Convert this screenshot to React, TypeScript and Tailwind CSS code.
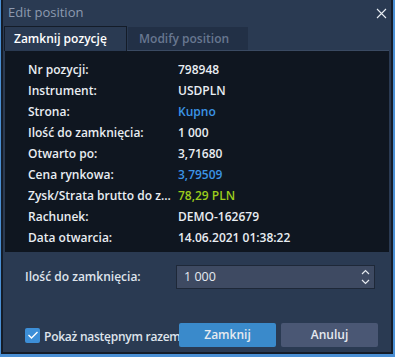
import React from "react";

const rows: { label: string; value: string; color?: string }[] = [
  { label: "Nr pozycji:", value: "798948" },
  { label: "Instrument:", value: "USDPLN" },
  { label: "Strona:", value: "Kupno", color: "text-[#3b94e6]" },
  { label: "Ilość do zamknięcia:", value: "1 000" },
  { label: "Otwarto po:", value: "3,71680" },
  { label: "Cena rynkowa:", value: "3,79509", color: "text-[#3b94e6]" },
  { label: "Zysk/Strata brutto do z...", value: "78,29 PLN", color: "text-[#9ccc1c]" },
  { label: "Rachunek:", value: "DEMO-162679" },
  { label: "Data otwarcia:", value: "14.06.2021 01:38:22" },
];

export default function App() {
  return (
    <div
      className="w-[395px] h-[357px] bg-[#4a8fd4] pl-[1px] pr-[2px] pb-[3px] overflow-hidden"
      style={{ fontFamily: '"Open Sans", "Noto Sans", sans-serif' }}
    >
      <div className="h-full flex flex-col bg-[#2a3a52] border-l-2 border-r-2 border-b-2 border-[#141c28]">
        {/* title bar */}
        <div className="h-[25px] flex items-center justify-between pl-[5px] pr-[4px] shrink-0">
          <span className="text-[13px] text-[#8d9ab0] leading-none">Edit position</span>
          <svg width="11" height="11" viewBox="0 0 11 11" className="mt-[1px]">
            <path d="M1 1 L10 10 M10 1 L1 10" stroke="#e8edf3" strokeWidth="1.1" />
          </svg>
        </div>
        {/* tabs */}
        <div className="flex items-end h-[25px] pl-[1px] shrink-0">
          <div className="h-[25px] w-[123px] shrink-0 bg-[#2a3a52] border-t border-l border-r border-[#141c28] flex items-center pl-[9px] text-[12px] font-semibold text-white relative top-[1px]">
            Zamknij pozycję
          </div>
          <div className="h-[23px] w-[120px] shrink-0 ml-[1px] bg-[#223046] flex items-center pl-[11px] text-[12px] font-semibold text-[#687790]">
            Modify position
          </div>
        </div>
        {/* content */}
        <div className="mx-[2px] h-[202px] bg-[#0f1620] border-t border-[#3a4a62] pt-[8px] pl-[23px] shrink-0">
          {rows.map((r) => (
            <div key={r.label} className="flex items-center h-[21px] text-[12px] font-semibold">
              <div className="w-[150px] shrink-0 pr-[4px] whitespace-nowrap text-[#e9edf2]">{r.label}</div>
              <div className={"whitespace-nowrap " + (r.color ?? "text-[#e9edf2]")}>{r.value}</div>
            </div>
          ))}
        </div>
        {/* bottom */}
        <div className="flex-1 flex flex-col pl-[22px] pr-[12px]">
          <div className="flex items-center mt-[13px] h-[24px]">
            <div className="w-[151px] shrink-0 text-[12px] font-semibold text-[#dfe4ec]">Ilość do zamknięcia:</div>
            <div className="w-[199px] shrink-0 h-[24px] bg-[#3e4a62] border border-[#1e2838] flex items-center justify-between pl-[7px] pr-[4px]">
              <span className="text-[12.5px] text-[#e6eaf0]">1 000</span>
              <svg width="9" height="16" viewBox="0 0 9 16">
                <path d="M1 5 L4.5 1.5 L8 5" stroke="#e6eaf0" strokeWidth="1.2" fill="none" />
                <path d="M1 11 L4.5 14.5 L8 11" stroke="#e6eaf0" strokeWidth="1.2" fill="none" />
              </svg>
            </div>
          </div>
          <div className="flex items-center mt-[34px]">
            <div className="w-[15px] h-[15px] rounded-[2px] bg-[#3d8fd8] flex items-center justify-center shrink-0">
              <svg width="12" height="10" viewBox="0 0 12 10">
                <path d="M1.5 5 L4.5 8 L10.5 2" stroke="#ffffff" strokeWidth="1.4" fill="none" />
              </svg>
            </div>
            <div className="ml-[4px] shrink-0 w-[135px]">
              <span className="text-[12px] font-semibold tracking-[-0.25px] text-[#dfe4ec] whitespace-nowrap">Pokaż następnym razem</span>
            </div>
            <button className="w-[97px] shrink-0 h-[24px] bg-[#3a8acb] rounded-[2px] text-[12px] font-semibold text-[#e6eaf0]">
              Zamknij
            </button>
            <button className="ml-[5px] w-[97px] shrink-0 h-[24px] bg-[#4a5774] rounded-[2px] text-[12px] font-semibold text-[#e6eaf0]">
              Anuluj
            </button>
          </div>
        </div>
      </div>
    </div>
  );
}
